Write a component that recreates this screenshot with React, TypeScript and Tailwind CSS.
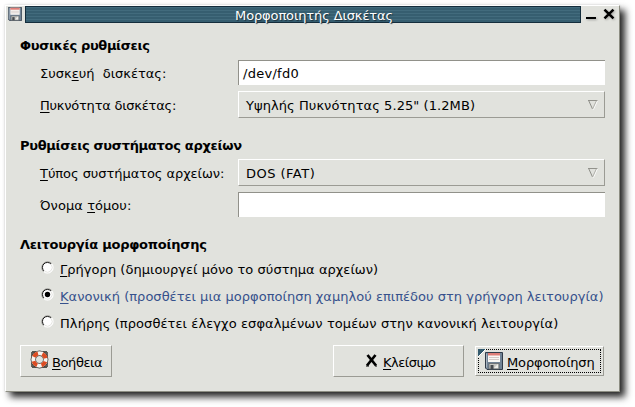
import type { ReactNode } from 'react';

function Key({ children }: { children: ReactNode }) {
  return <span className="underline decoration-1 underline-offset-2">{children}</span>;
}

function Heading({ children, className }: { children: ReactNode; className: string }) {
  return <h2 className={`flex h-4 items-center font-bold ${className}`}>{children}</h2>;
}

function Floppy({ className }: { className: string }) {
  return (
    <svg viewBox="0 0 18 18" className={className}>
      <path d="M.5.5h17v17H2L.5 16z" fill="#718395" stroke="#303b49" />
      <path d="M1.5 1.5v14" stroke="#a6b3bf" />
      <path d="M3 1h12v9H3z" fill="#faf8f5" />
      <path d="M3 1h12v2.5H3z" fill="#df7e78" />
      <path d="M4 5.5h10M4 7.5h10" stroke="#d5c9c6" />
      <path d="M4 11.5h10V17H4z" fill="#c4c4bf" stroke="#5d6265" strokeWidth=".7" />
      <path d="M5.5 13h3v4h-3z" fill="#464b50" />
      <path d="m9 16 4-4v4z" fill="#eeeeeb" />
    </svg>
  );
}

function Label({ children, className }: { children: ReactNode; className: string }) {
  return (
    <div className="w-[218px] pt-0.5 pl-5">
      <span className={className}>{children}</span>
    </div>
  );
}

function Combo({ children, className }: { children: ReactNode; className: string }) {
  return (
    <div className="flex h-[27px] w-[367px] items-center justify-between border border-t-white border-l-white border-r-[#9b9b94] border-b-[#9b9b94] pr-1.5 pl-[7px]">
      <span className={`pt-0.5 ${className}`}>{children}</span>
      <svg width="10" height="10" viewBox="0 0 10 10" fill="none">
        <path d="M9.6.5 5.3 9.6" stroke="#fff" />
        <path d="M0 .5h9.5" stroke="#92928c" />
        <path d="M.8.8 4.5 9" stroke="#8e8e88" />
        <path d="M8.4.8 4.6 9" stroke="#b0b0aa" />
      </svg>
    </div>
  );
}

function Radio({ checked, children, className }: { checked?: boolean; children: ReactNode; className: string }) {
  return (
    <div className="flex h-[27px] items-center pl-[35px]">
      <svg width="13" height="13" viewBox="0 0 13 13" className="mr-[6px] mb-1 shrink-0" fill="none">
        <circle cx="6.5" cy="6.5" r="5.7" fill="#fff" stroke="#fff" strokeWidth=".8" />
        <path d="M2.4 10.6A5.8 5.8 0 0 1 10.6 2.4" stroke="#8d8d87" />
        <path d="M2.9 9.9A4.9 4.9 0 0 1 9.9 2.9" stroke="#1c1c1b" />
        <path d="M10.3 3.6a4.8 4.8 0 0 1-6.7 6.7" stroke="#deded9" strokeWidth=".8" />
        {checked && <circle cx="6.5" cy="6.5" r="2.7" fill="#000" />}
      </svg>
      <span className={className}>{children}</span>
    </div>
  );
}

export default function App() {
  return (
    <div className="h-[407px] w-[635px] overflow-hidden bg-white pt-[5px] pl-[5px] font-['DejaVu_Sans',sans-serif] text-[13px] leading-4 whitespace-pre text-black">
      <div className="flex h-[387px] w-[615px] flex-col border border-t-white border-l-white border-r-[#8d8e83] border-b-[#8d8e83] bg-[#e1e2dd] shadow-[5px_5px_7px_rgba(0,0,0,0.85),0_0_2px_rgba(0,0,0,0.12)]">
        <div className="flex h-[17px] shrink-0">
          <div className="w-[19px] pt-px pl-0.5"><Floppy className="h-[14px] w-[14px]" /></div>
          <div className="flex h-[17px] w-[557px] justify-center border border-[#142d3c] bg-[repeating-linear-gradient(to_bottom,#426b7d_0px,#426b7d_1px,#365e70_1px,#365e70_3px)] pl-[22px] leading-[17px] text-white [text-shadow:1px_1px_1px_#1b303b]">
            <span className="tracking-[-0.12px]">Μορφοποιητής Δισκέτας</span>
          </div>
          <svg width="34" height="15" viewBox="0 0 34 15" className="ml-1 drop-shadow-[1px_1px_1px_#00000044]">
            <path d="M1 11h10v2H1z" />
            <path d="m19.5 3.5 9 9m0-9-9 9" stroke="#000" strokeWidth="2.5" />
          </svg>
        </div>

        <section className="pt-[15px] pl-[14px]">
          <Heading className="tracking-[-0.35px]">Φυσικές ρυθμίσεις</Heading>
          <div className="mt-[6px] flex h-[25px] items-center">
            <Label className="tracking-[0px]">Συσκ<Key>ε</Key>υή  δισκέτας:</Label>
            <div className="flex h-[25px] w-[367px] items-center border-t border-l border-[#91918a] bg-white pt-px pl-1"><span className="tracking-[0.28px]">/dev/fd0</span></div>
          </div>
          <div className="mt-[6px] flex items-center">
            <Label className="tracking-[-0.23px]"><Key>Π</Key>υκνότητα δισκέτας:</Label>
            <Combo className="tracking-[0.07px]">Υψηλής Πυκνότητας 5.25" (1.2MB)</Combo>
          </div>
        </section>

        <section className="pt-[20px] pl-[14px]">
          <Heading className="tracking-[-0.3px]">Ρυθμίσεις συστήματος αρχείων</Heading>
          <div className="mt-[5px] flex items-center">
            <Label className="tracking-[-0.06px]"><Key>Τ</Key>ύπος συστήματος αρχείων:</Label>
            <Combo className="tracking-[0.48px]">DOS (FAT)</Combo>
          </div>
          <div className="mt-[6px] flex h-[25px] items-center">
            <Label className="tracking-[0.06px]">Όνομα <Key>τ</Key>όμου:</Label>
            <div className="h-[25px] w-[367px] border-t border-l border-[#91918a] bg-white" />
          </div>
        </section>

        <section className="pt-[20px]">
          <Heading className="pl-[14px] tracking-[-0.26px]">Λειτουργία μορφοποίησης</Heading>
          <div className="pt-[3px]">
            <Radio className="tracking-[0.04px]"><Key>Γ</Key>ρήγορη (δημιουργεί μόνο το σύστημα αρχείων)</Radio>
            <Radio checked className="text-[#36518c] tracking-[0.02px]"><Key>Κ</Key>ανονική (προσθέτει μια μορφοποίηση χαμηλού επιπέδου στη γρήγορη λειτουργία)</Radio>
            <Radio className="tracking-[0.09px]">Πλήρης (προσθέτει έλεγχο εσφαλμένων τομέων στην κανονική λειτουργία)</Radio>
          </div>
        </section>

        <div className="mt-[8px] flex items-center pl-[14px]">
          <button className="flex h-8 w-[92px] items-center border border-t-white border-l-white border-r-[#9b9b94] border-b-[#9b9b94] pl-[9px]">
            <svg width="19" height="19" viewBox="0 0 19 19" className="mr-[3px] mb-1 shrink-0" fill="none">
              <path d="M2 2h4M2 2v4M17 2h-4M17 2v4M2 17h4M2 17v-4M17 17h-4M17 17v-4" stroke="#55554f" strokeWidth="1.8" />
              <circle cx="9.5" cy="9.5" r="6.2" stroke="#3a3a38" strokeWidth="5.4" />
              <circle cx="9.5" cy="9.5" r="6.2" stroke="#f7f4ef" strokeWidth="4" />
              <circle cx="9.5" cy="9.5" r="6.2" stroke="#dc4c22" strokeWidth="4" strokeDasharray="5.2 4.539" strokeDashoffset="-2.2" />
            </svg>
            <span className="pt-[3px] tracking-[-0.4px]"><Key>Β</Key>οήθεια</span>
          </button>
          <button className="ml-[221px] flex h-8 w-[131px] items-center border border-t-white border-l-white border-r-[#9b9b94] border-b-[#9b9b94] pl-[31px]">
            <svg width="13" height="13" viewBox="0 0 13 13" className="mr-[5px] mb-px shrink-0">
              <path d="M2.5 1 11 11.5M10.5 1 2 11.5" stroke="#000" strokeWidth="2.7" />
              <path d="M1 12h3M10 12h2" stroke="#000" />
            </svg>
            <span className="pt-[3px] tracking-[-0.5px]"><Key>Κ</Key>λείσιμο</span>
          </button>
          <button className="ml-[11px] flex h-[30px] w-[129px] border border-t-white border-l-white border-r-[#9b9b94] border-b-[#9b9b94] p-0.5">
            <span className="relative flex h-6 w-[123px] items-center border border-dotted border-black pl-[6px]">
              <svg width="8" height="8" viewBox="0 0 8 8" className="absolute -top-px -left-px"><path d="M0 0h8L0 8z" fill="#345b6e" /><path d="M8 0 0 8" stroke="#fff" /></svg>
              <Floppy className="mr-[4px] h-[18px] w-[18px] shrink-0" />
              <span className="pt-[3px] tracking-[-0.12px]"><Key>Μ</Key>ορφοποίηση</span>
            </span>
          </button>
        </div>
      </div>
    </div>
  );
}
